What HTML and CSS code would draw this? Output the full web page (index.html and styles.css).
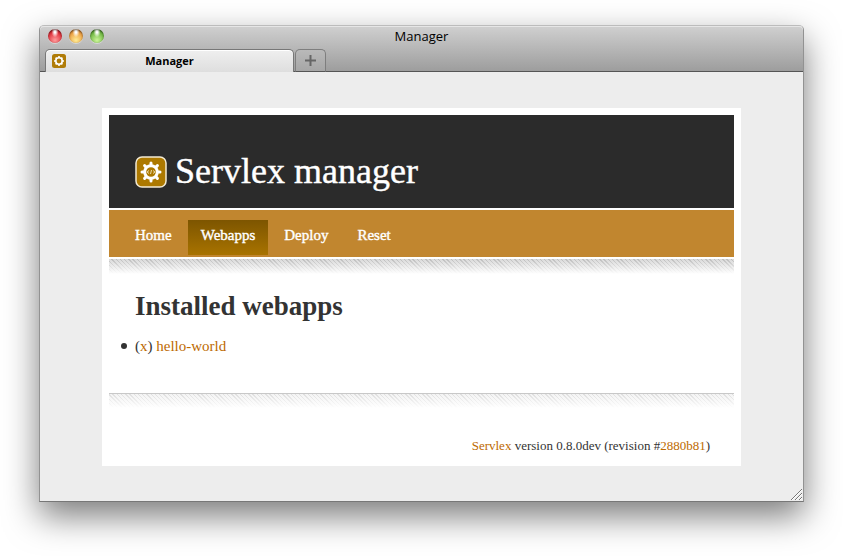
FILE: index.html
```html
<!DOCTYPE html>
<html lang="en">
<head>
<meta charset="utf-8">
<title>Manager</title>
<link rel="stylesheet" href="styles.css">
</head>
<body>
<svg class="defs" aria-hidden="true">
  <symbol id="gear" viewBox="0 0 32 32">
    <rect class="gear-plate" x="1" y="1" width="30" height="30" rx="6"/>
    <path class="gear-teeth" d="M16 7v18M7 16h18M9.600 9.600l12.800 12.800M22.400 9.600L9.600 22.400"/>
    <circle class="gear-ring" cx="16" cy="16" r="6.300"/>
    <path class="gear-code" d="M14 14.500l-2 1.500 2 1.500M18 14.500l2 1.500-2 1.500M16.500 14l-1 4"/>
  </symbol>
  <symbol id="gear-small" viewBox="0 0 16 16">
    <rect class="small-plate" x="1" y="1" width="14" height="14" rx="2.500"/>
    <path class="small-teeth" d="M8 3v10M3 8h10M4.600 4.600l6.800 6.800M11.400 4.600l-6.800 6.800"/>
    <circle class="small-ring" cx="8" cy="8" r="3.200"/>
  </symbol>
</svg>
<div class="window">
  <header class="chrome">
    <div class="titlebar">
      <div class="lights">
        <button class="light red" aria-label="Close"></button>
        <button class="light amber" aria-label="Minimize"></button>
        <button class="light green" aria-label="Zoom"></button>
      </div>
      <div class="window-title">Manager</div>
    </div>
    <div class="tabs">
      <button class="tab">
        <svg class="tab-icon" aria-hidden="true"><use href="#gear-small"/></svg>
        <span class="tab-label">Manager</span>
      </button>
      <button class="new-tab" aria-label="New tab">
        <svg class="plus" viewBox="0 0 11 11" aria-hidden="true"><path d="M5.500 0v11M0 5.500h11"/></svg>
      </button>
    </div>
  </header>
  <div class="viewport">
    <div class="card">
      <div class="banner">
        <svg class="logo" aria-hidden="true"><use href="#gear"/></svg>
        <h1>Servlex manager</h1>
      </div>
      <nav class="nav">
        <a href="#home">Home</a>
        <a class="current" href="#webapps" aria-current="page">Webapps</a>
        <a href="#deploy">Deploy</a>
        <a href="#reset">Reset</a>
      </nav>
      <main class="content">
        <h2>Installed webapps</h2>
        <ul>
          <li>(<a href="#remove">x</a>) <a href="#hello-world">hello-world</a></li>
        </ul>
      </main>
      <footer class="footer">
        <p><a href="#servlex">Servlex</a> version 0.8.0dev (revision #<a href="#revision">2880b81</a>)</p>
      </footer>
    </div>
  </div>
  <svg class="grip" viewBox="0 0 12 12" aria-hidden="true"><path class="grip-light" d="M2 12L12 2M6 12l6-6M10 12l2-2"/><path d="M1 12L12 1M5 12l7-7M9 12l3-3"/></svg>
</div>
</body>
</html>
```

FILE: styles.css
```css
* {
  box-sizing: border-box;
}

body {
  margin: 0;
  padding: 25px 39px 54px;
  background: #fff;
  color: #333;
  font-family: Georgia, "Liberation Serif", serif;
}

a {
  color: #bd6a00;
  text-decoration: none;
}

button {
  padding: 0;
  border: 0;
  font: inherit;
  color: inherit;
}

.defs {
  position: absolute;
  width: 0;
  height: 0;
}

.gear-plate {
  fill: #ad7900;
  stroke: #f3ead3;
  stroke-width: 1.5;
}

.gear-teeth {
  stroke: #fff;
  stroke-width: 3;
  stroke-linecap: round;
}

.gear-ring {
  fill: #ad7900;
  stroke: #fff;
  stroke-width: 3;
}

.gear-code {
  fill: none;
  stroke: #ead9ae;
  stroke-width: 1;
}

.small-plate {
  fill: #b07c08;
}

.small-teeth {
  stroke: #fff;
  stroke-width: 1.6;
}

.small-ring {
  fill: #b07c08;
  stroke: #fff;
  stroke-width: 1.6;
}

/* Window frame */

.window {
  position: relative;
  border: 1px solid #929292;
  border-top-color: #bcbcbc;
  border-bottom-color: #777;
  border-radius: 5px 5px 0 0;
  background: #ededed;
  box-shadow: 0 14px 34px rgba(0, 0, 0, 0.52);
}

.chrome {
  border-radius: 4px 4px 0 0;
  background: linear-gradient(#d0d0d0, #9c9c9c);
  box-shadow: inset 0 1px #e6e6e6, inset 0 -1px #555;
  font-family: "Lucida Grande", "Open Sans", sans-serif;
  color: #000;
}

.titlebar {
  display: grid;
  grid-template-columns: 1fr auto 1fr;
  height: 23px;
}

.lights {
  display: flex;
  gap: 7px;
  padding: 3px 0 0 8px;
}

.light {
  width: 14px;
  height: 14px;
  border-radius: 50%;
  box-shadow: inset 0 1px 2px rgba(0, 0, 0, 0.5), 0 1px rgba(255, 255, 255, 0.4);
}

.red {
  background: radial-gradient(ellipse at 50% 20%, #fff 8%, transparent 35%), radial-gradient(circle at 50% 80%, #ff9c9c, #e0323c 60%, #8a1018);
}

.amber {
  background: radial-gradient(ellipse at 50% 20%, #fff 8%, transparent 35%), radial-gradient(circle at 50% 80%, #ffec94, #eda143 60%, #92501a);
}

.green {
  background: radial-gradient(ellipse at 50% 20%, #fff 8%, transparent 35%), radial-gradient(circle at 50% 80%, #ccf59a, #72b944 60%, #316a1c);
}

.window-title {
  font-size: 13px;
  line-height: 21px;
}

.tabs {
  display: flex;
  gap: 1px;
  height: 23px;
  padding-left: 5px;
}

.tab {
  display: grid;
  grid-template-columns: 16px 1fr 16px;
  align-items: center;
  flex: 0 0 249px;
  padding: 0 5px;
  border: 1px solid #777;
  border-bottom: 0;
  border-radius: 5px 5px 0 0;
  background: linear-gradient(#efefef, #dedede);
  box-shadow: inset 0 1px #fff;
}

.tab-icon {
  width: 16px;
  height: 16px;
}

.tab-label {
  font-size: 11px;
  font-weight: bold;
  line-height: 20px;
}

.new-tab {
  display: grid;
  place-items: center;
  width: 31px;
  border: 1px solid #7e7e7e;
  border-bottom-color: #555;
  border-radius: 5px 5px 0 0;
  background: linear-gradient(#b9b9b9, #a6a6a6);
}

.plus {
  width: 11px;
  height: 11px;
  fill: none;
  stroke: #666;
  stroke-width: 2;
}

/* Page */

.viewport {
  padding: 36px 62px 35px;
}

.card {
  padding: 7px;
  background: #fff;
}

.banner {
  display: flex;
  align-items: center;
  gap: 8px;
  padding: 36px 26px 16px;
  background: #2b2b2b;
}

.logo {
  width: 32px;
  height: 32px;
}

h1 {
  margin: 0;
  color: #fff;
  font-size: 36px;
  font-weight: normal;
  line-height: 41px;
  -webkit-text-stroke: 0.4px #fff;
}

.nav {
  display: flex;
  gap: 3px;
  margin: 2px 0;
  padding: 10px 13px 2px;
  background: #c1862f;
}

.nav a {
  padding: 0 13px 5px;
  color: #fff;
  font-size: 15px;
  line-height: 30px;
  -webkit-text-stroke: 0.4px #fff;
}

.nav .current {
  background: linear-gradient(#7d5500, #a87300);
}

.content {
  padding: 30px 26px 37px;
  background: linear-gradient(rgba(255, 255, 255, 0), #fff 15px), repeating-linear-gradient(45deg, #bcbcbc 0 1px, #dadada 1px 3px);
}

h2 {
  margin: 0 0 13px;
  font-size: 27px;
  line-height: 34px;
}

ul {
  margin: 0;
  padding: 0;
  font-size: 15px;
  line-height: 20px;
  list-style: none;
}

li::before {
  content: "";
  float: left;
  width: 6px;
  height: 6px;
  margin: 7px 0 0 -14px;
  border-radius: 50%;
  background: #333;
}

.footer {
  border-top: 1px solid #c8c8c8;
  background: linear-gradient(rgba(255, 255, 255, 0), #fff 14px), repeating-linear-gradient(45deg, #dedede 0 1px, #f4f4f4 1px 3px);
  padding: 42px 24px 4px;
  font-size: 13px;
  line-height: 19px;
  text-align: right;
}

.footer p {
  margin: 0;
}

.grip {
  position: absolute;
  right: 1px;
  bottom: 1px;
  width: 12px;
  height: 12px;
  fill: none;
  stroke: #777;
}

.grip-light {
  stroke: #fff;
}
```
